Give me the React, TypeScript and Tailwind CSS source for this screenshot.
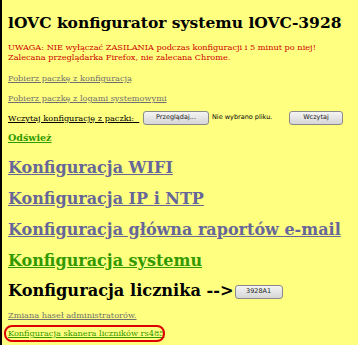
import React from "react";

const serif = { fontFamily: '"DejaVu Serif", serif' };
const sans = { fontFamily: '"DejaVu Sans", sans-serif' };

function Btn({ children, w }: { children: React.ReactNode; w: string }) {
  return (
    <span
      className={`inline-flex items-center justify-center h-[14px] ${w} rounded-[3px] border border-[#8a8a8a] bg-gradient-to-b from-[#f4f4f4] to-[#d6d6d6] text-[6.5px] text-[#222]`}
      style={sans}
    >
      {children}
    </span>
  );
}

export default function App() {
  return (
    <div
      className="w-[358px] h-[345px] bg-[#ffff80] border-l-2 border-black pl-[6px] overflow-hidden relative"
      style={serif}
    >
      <div className="pt-[12px] h-[34px] leading-[22px] text-[15.5px] font-bold text-black whitespace-nowrap">
        lOVC konfigurator systemu lOVC-3928
      </div>
      <div className="mt-[8px] leading-[10px] text-[8.2px] text-[#cc0000] whitespace-nowrap">
        <div>UWAGA: NIE wyłączać ZASILANIA podczas konfiguracji i 5 minut po niej!</div>
        <div>Zalecana przeglądarka Firefox, nie zalecana Chrome.</div>
      </div>
      <div className="mt-[11px] leading-[10px] text-[8.2px] text-[#707070] underline whitespace-nowrap">
        Pobierz paczkę z konfiguracją
      </div>
      <div className="mt-[10px] leading-[10px] text-[8.2px] text-[#707070] underline whitespace-nowrap">
        Pobierz paczkę z logami systemowymi
      </div>
      <div className="mt-[8px] h-[14px] flex items-center whitespace-nowrap">
        <span className="w-[135px] shrink-0 text-[8.2px] text-black underline">
          Wczytaj konfigurację z paczki:&nbsp;&nbsp;
        </span>
        <Btn w="w-[66px]">Przeglądaj...</Btn>
        <span className="ml-[3px] w-[77px] shrink-0 text-[6.5px] text-black" style={sans}>
          Nie wybrano pliku.
        </span>
        <Btn w="w-[54px]">Wczytaj</Btn>
      </div>
      <div className="mt-[8px] leading-[10px] text-[9.5px] font-bold text-[#339900] underline whitespace-nowrap">
        Odśwież
      </div>
      <div className="mt-[14px] leading-[22px] text-[16px] font-bold text-[#666699] underline whitespace-nowrap">
        Konfiguracja WIFI
      </div>
      <div className="mt-[9px] leading-[22px] text-[16px] font-bold text-[#666699] underline whitespace-nowrap">
        Konfiguracja IP i NTP
      </div>
      <div className="mt-[9px] leading-[22px] text-[16px] font-bold text-[#666699] underline whitespace-nowrap">
        Konfiguracja główna raportów e-mail
      </div>
      <div className="mt-[9px] leading-[22px] text-[16px] font-bold text-[#339900] underline whitespace-nowrap">
        Konfiguracja systemu
      </div>
      <div className="mt-[8px] h-[22px] flex items-end whitespace-nowrap">
        <span className="leading-[22px] text-[16.2px] font-bold text-black">Konfiguracja licznika --&gt;</span>
        <span className="ml-[1px] mb-[2px]">
          <Btn w="w-[48px]">3928A1</Btn>
        </span>
      </div>
      <div className="mt-[8px] leading-[10px] text-[8.2px] text-[#707070] underline whitespace-nowrap">
        Zmiana haseł administratorów.
      </div>
      <div className="mt-[8px] relative leading-[10px] text-[8.2px] text-[#339900] underline whitespace-nowrap">
        <span className="absolute left-[-4px] top-[-3px] w-[161px] h-[17px] rounded-[8px] border-2 border-[#dd0000]" />
        Konfiguracja skanera liczników rs485
      </div>
    </div>
  );
}
